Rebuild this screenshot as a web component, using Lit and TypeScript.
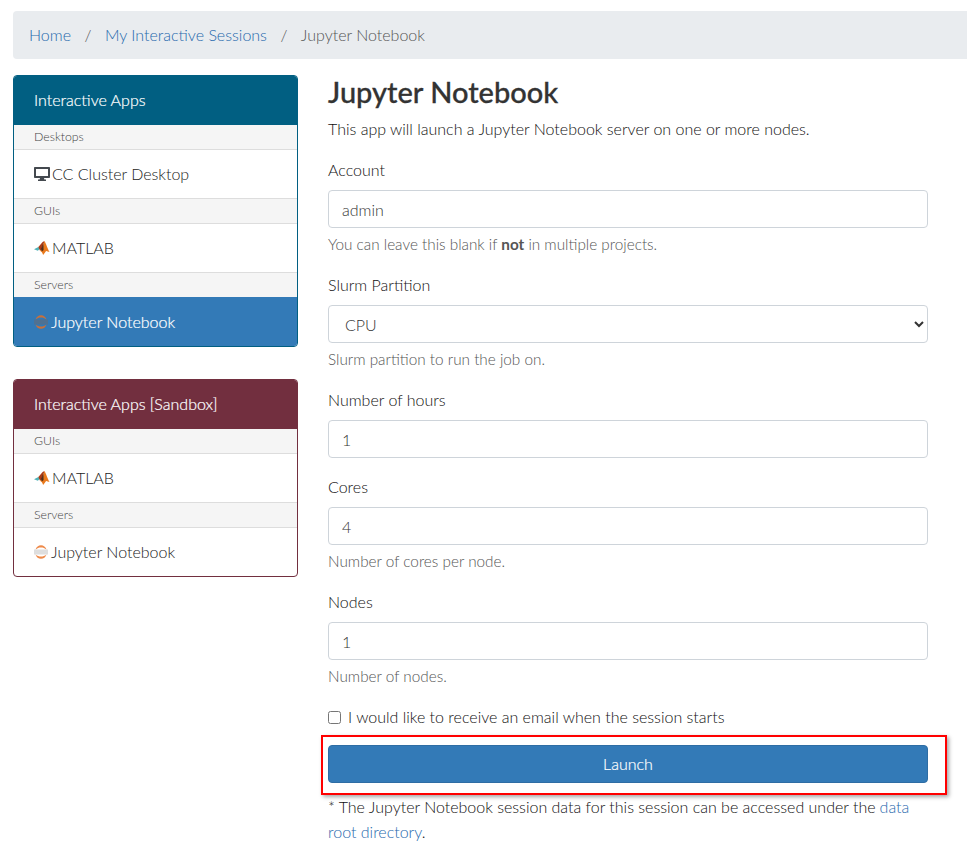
import { LitElement, html, css } from "lit";
import { customElement } from "lit/decorators.js";

const desktop = html`<svg class="ico desk" viewBox="0 0 16 14" aria-hidden="true"><path fill="#44494f" fill-rule="evenodd" d="M.8 0h14.400a.8.8 0 0 1 .8.8v9.400a.8.8 0 0 1-.8.8H10l.4 1.500h1.600V14H4v-1.500h1.600L6 11H.8a.8.8 0 0 1-.8-.8V.8A.8.8 0 0 1 .8 0zM2 2v7h12V2z"/></svg>`;

const matlab = html`<svg class="ico" viewBox="0 0 16 14" aria-hidden="true">
  <path fill="#4fb3b8" d="M0 8.300 4.400 6l1.800 1.600-2.400 2.200z"/>
  <path fill="#a83c18" d="M4.400 6 8.600 1 10.500 0 8 8 6 9.800z"/>
  <path fill="#ea7a1c" d="M10.500 0c1.400 2 3.200 8 5 11l-3.400-1c-1 1.400-1.800 2.800-3 4-.6-2-1.600-3.500-3.100-4.200L8 8z"/>
  <path fill="#2b1d18" d="M7 8.500 9.400 2.500 9.600 9 8 10.500z" opacity=".8"/>
</svg>`;

const jupyter = (active: boolean) => html`<svg class="ico jup" viewBox="0 0 14 16" aria-hidden="true">
  <rect x="0" y="5.500" width="14" height="5" fill="${active ? "#4f7192" : "#dedede"}"/>
  <path fill="${active ? "#c9703a" : "#ee8a4a"}" d="M1.500 5.500C2.300 2.800 4.500 1.200 7 1.200s4.700 1.600 5.500 4.300C10.800 4 9 3.400 7 3.400S3.200 4 1.500 5.500zM1.500 10.500c.8 2.700 3 4.300 5.500 4.300s4.700-1.600 5.500-4.300C10.800 12 9 12.600 7 12.600S3.200 12 1.500 10.500z"/>
</svg>`;

@customElement("app-root")
export class AppRoot extends LitElement {
  static styles = css`
    :host { display: block; font-family: Lato, "Open Sans", sans-serif; font-size: 16px; font-weight: 300; line-height: 24px; color: #111; background: #fff; overflow: hidden; }
    * { box-sizing: border-box; }
    a { color: #1f69ad; text-decoration: none; }
    .page { padding: 11px 0 15px 13px; }
    .crumbs { display: flex; height: 48px; align-items: center; padding: 0 16px; background: #e9ecef; border-radius: 4px 0 0 4px; margin: 0 0 16px; }
    .crumbs .sep { color: #555; padding: 0 13.5px; }
    .crumbs .cur { color: #555; }
    .cols { display: grid; grid-template-columns: 285px 600px; column-gap: 30px; align-items: start; }
    .side { display: flex; flex-direction: column; gap: 32px; }
    .card { border: 1px solid var(--c); border-radius: 4px; overflow: hidden; background: #fff; }
    .card.blue { --c: #015f82; }
    .card.red { --c: #722f3f; }
    .head { background: var(--c); color: #fff; -webkit-text-stroke: .2px #fff; height: 49px; display: flex; align-items: center; padding: 0 20px 2px; }
    .sec { height: 25px; padding: 0 20px; background: #f5f5f5; border-bottom: 1px solid #ddd; color: #444; font-size: 12.300px; line-height: 23px; }
    .item + .sec { height: 26px; border-top: 1px solid #ddd; line-height: 24px; }
    .item { height: 48px; display: flex; align-items: center; padding: 0 20px; color: #222; }
    .item.active { position: relative; margin-top: -1px; height: 49px; background: #337ab7; color: #fff; -webkit-text-stroke: .2px #fff; }
    .ico { width: 16px; height: 14px; flex: none; margin-right: 2px; display: block; }
    .jup { width: 14px; height: 16px; margin-right: 3px; }
    h1 { margin: 0 0 8px; font-size: 29px; line-height: 34px; font-weight: 500; color: #333; -webkit-text-stroke: .3px #333; }
    .main p { margin: 0 0 16px; }
    .group { margin-bottom: 16px; }
    label.lab { display: block; line-height: 25px; margin-bottom: 8px; }
    .ctl { display: block; width: 100%; height: 38px; padding: 6px 13px; font: inherit; color: #333; background: #fff; border: 1px solid #ced4da; border-radius: 4px; outline: none; }
    select.ctl { padding: 6px 12px; }
    .help { display: block; margin-top: 4px; font-size: 15.300px; line-height: 24px; color: #555; }
    .help strong { font-weight: 700; }
    .check { display: flex; align-items: center; height: 25px; padding-top: 1px; margin: 0 0 16px; }
    .check input { margin: 0 7px 0 0; width: 13px; height: 13px; }
    .launch-wrap { position: relative; margin-bottom: 11px; }
    .launch { display: block; width: 100%; height: 38px; border: 1px solid #2e6da4; border-radius: 4px; background: #337ab7; color: #fff; -webkit-text-stroke: .2px #fff; font: inherit; }
    .mark { position: absolute; left: -7px; right: -19px; top: -10px; bottom: -12px; border: 2px solid #f00; box-shadow: 2px 2px 4px rgba(0,0,0,.35); pointer-events: none; }
    .main .note { margin: 0; line-height: 25px; }
    .note-line { display: block; }
    .note a { margin-left: 4px; }
    .note-line + .note-line a { margin-left: 0; }
  `;

  private card(color: string, title: string, secs: [string, [any, string, boolean?][]][]) {
    return html`<div class="card ${color}">
      <div class="head">${title}</div>
      ${secs.map(([s, items]) => html`<div class="sec">${s}</div>
        ${items.map(([i, t, a]) => html`<div class="item ${a ? "active" : ""}">${i}${t}</div>`)}`)}
    </div>`;
  }

  private field(label: string, value: string, help?: unknown) {
    return html`<div class="group">
      <label class="lab">${label}</label>
      <input class="ctl" .value=${value} />
      ${help ? html`<small class="help">${help}</small>` : ""}
    </div>`;
  }

  render() {
    return html`<div class="page">
      <nav class="crumbs">
        <a href="#">Home</a><span class="sep">/</span>
        <a href="#">My Interactive Sessions</a><span class="sep">/</span>
        <span class="cur">Jupyter Notebook</span>
      </nav>
      <div class="cols">
        <aside class="side">
          ${this.card("blue", "Interactive Apps", [
            ["Desktops", [[desktop, "CC Cluster Desktop"]]],
            ["GUIs", [[matlab, "MATLAB"]]],
            ["Servers", [[jupyter(true), "Jupyter Notebook", true]]],
          ])}
          ${this.card("red", "Interactive Apps [Sandbox]", [
            ["GUIs", [[matlab, "MATLAB"]]],
            ["Servers", [[jupyter(false), "Jupyter Notebook"]]],
          ])}
        </aside>
        <main class="main">
          <h1>Jupyter Notebook</h1>
          <p>This app will launch a Jupyter Notebook server on one or more nodes.</p>
          ${this.field("Account", "admin", html`You can leave this blank if <strong>not</strong> in multiple projects.`)}
          <div class="group">
            <label class="lab">Slurm Partition</label>
            <select class="ctl"><option>CPU</option></select>
            <small class="help">Slurm partition to run the job on.</small>
          </div>
          ${this.field("Number of hours", "1")}
          ${this.field("Cores", "4", "Number of cores per node.")}
          ${this.field("Nodes", "1", "Number of nodes.")}
          <label class="check"><input type="checkbox" />I would like to receive an email when the session starts</label>
          <div class="launch-wrap">
            <button class="launch">Launch</button>
            <div class="mark"></div>
          </div>
          <p class="note"><span class="note-line">* The Jupyter Notebook session data for this session can be accessed under the<a href="#">data</a></span><span class="note-line"><a href="#">root directory</a>.</span></p>
        </main>
      </div>
    </div>`;
  }
}
